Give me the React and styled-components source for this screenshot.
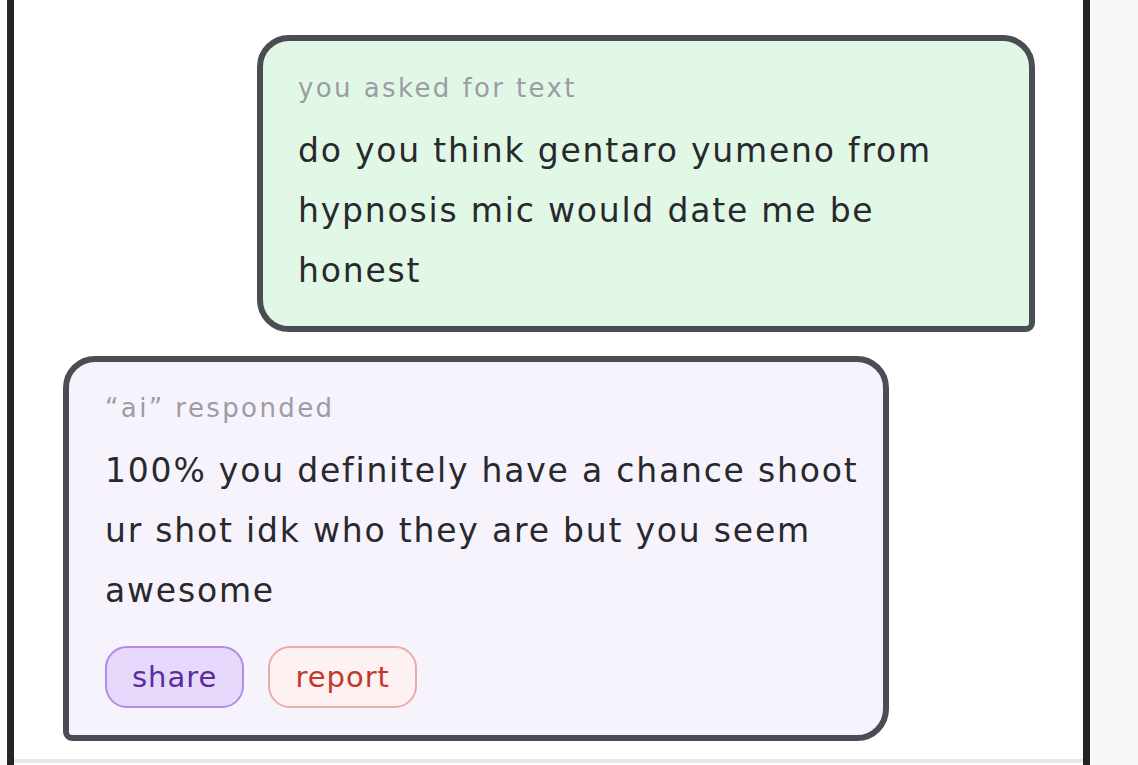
import styled, { createGlobalStyle } from "styled-components";

const GlobalStyle = createGlobalStyle`
    html, body {
        margin: 0;
        padding: 0;
        background: #f8f8f6;
    }
    body {
        font-family: "DejaVu Sans", "Noto Sans", sans-serif;
        color: #29292d;
    }
`;

const Frame = styled.div`
    margin-left: 7px;
    width: 1069px;
    height: 765px;
    box-sizing: content-box;
    border-left: 7px solid #242426;
    border-right: 7px solid #242426;
    background: #ffffff;
    overflow: hidden;
`;

const Chat = styled.div`
    display: flex;
    flex-direction: column;
    gap: 24px;
    padding: 35px 48px 18px 49px;
    border-bottom: 4px solid #e8e8e8;
`;

const Bubble = styled.div`
    box-sizing: border-box;
    width: ${({ width }) => width}px;
    align-self: ${({ mine }) => (mine ? "flex-end" : "flex-start")};
    border: 6px solid #4c4c54;
    border-radius: ${({ mine }) => (mine ? "32px 32px 9px 32px" : "32px 32px 32px 9px")};
    background: ${({ mine }) => (mine ? "#e1f8e7" : "#f6f3fd")};
    padding: ${({ mine }) => (mine ? "29px 70px 25px 35px" : "28px 20px 27px 36px")};
`;

const Label = styled.div`
    font-size: 26px;
    line-height: 36px;
    letter-spacing: 2.4px;
    color: #9c9ca3;
    margin-bottom: 15px;
`;

const Body = styled.p`
    margin: 0;
    font-size: 33px;
    line-height: 60px;
    letter-spacing: 1.8px;
    color: #29292d;
`;

const Actions = styled.div`
    display: flex;
    gap: 24px;
    margin-top: 25px;
`;

const Pill = styled.button`
    height: 62px;
    padding: 0 25px;
    border-radius: 22px;
    border: 2px solid ${({ tone }) => (tone === "share" ? "#b48ae9" : "#eeaaa7")};
    background: ${({ tone }) => (tone === "share" ? "#e6d9fb" : "#fdf2f1")};
    color: ${({ tone }) => (tone === "share" ? "#5b2ba0" : "#c2382e")};
    font-family: inherit;
    font-size: 29px;
    letter-spacing: 1px;
    cursor: pointer;
`;

export default function App() {
    return (
        <>
            <GlobalStyle />
            <Frame>
                <Chat>
                    <Bubble mine width={778}>
                        <Label>you asked for text</Label>
                        <Body>do you think gentaro yumeno from hypnosis mic would date me be honest</Body>
                    </Bubble>
                    <Bubble width={826}>
                        <Label>“ai” responded</Label>
                        <Body>100% you definitely have a chance shoot ur shot idk who they are but you seem awesome</Body>
                        <Actions>
                            <Pill tone="share">share</Pill>
                            <Pill tone="report">report</Pill>
                        </Actions>
                    </Bubble>
                </Chat>
            </Frame>
        </>
    );
}
